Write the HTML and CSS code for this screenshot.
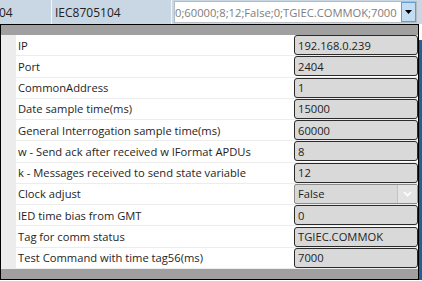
FILE: index.html
```html
<!DOCTYPE html>
<html lang="en">
<head>
    <meta charset="UTF-8">
    <title>Protocol Settings</title>
    <link rel="stylesheet" href="styles.css">
</head>
<body>
    <div class="grid-row">
        <div class="cell cell-id">04</div>
        <div class="cell cell-name">IEC8705104</div>
        <div class="cell cell-config">
            <div class="combo">
                <span class="combo-text">0;60000;8;12;False;0;TGIEC.COMMOK;7000</span>
                <span class="combo-button">
                    <svg width="7" height="4" viewBox="0 0 7 4"><path d="M0 0h7L3.5 4z" fill="#000"/></svg>
                </span>
            </div>
        </div>
    </div>

    <div class="lower">
        <div class="popup">
            <div class="popup-strip"></div>
            <div class="prop-list">
                <div class="prop-row"><div class="prop-name">IP</div><div class="prop-value">192.168.0.239</div></div>
                <div class="prop-row"><div class="prop-name">Port</div><div class="prop-value">2404</div></div>
                <div class="prop-row"><div class="prop-name">CommonAddress</div><div class="prop-value">1</div></div>
                <div class="prop-row"><div class="prop-name">Date sample time(ms)</div><div class="prop-value">15000</div></div>
                <div class="prop-row"><div class="prop-name">General Interrogation sample time(ms)</div><div class="prop-value">60000</div></div>
                <div class="prop-row"><div class="prop-name">w - Send ack after received w IFormat APDUs</div><div class="prop-value">8</div></div>
                <div class="prop-row"><div class="prop-name">k - Messages received to send state variable</div><div class="prop-value">12</div></div>
                <div class="prop-row">
                    <div class="prop-name">Clock adjust</div>
                    <div class="prop-value prop-select">
                        <span class="select-text">False</span>
                        <span class="select-button">
                            <svg width="9" height="6" viewBox="0 0 9 6"><path d="M1 1l3.5 3.5L8 1" fill="none" stroke="#fff" stroke-width="1.6"/></svg>
                        </span>
                    </div>
                </div>
                <div class="prop-row"><div class="prop-name">IED time bias from GMT</div><div class="prop-value">0</div></div>
                <div class="prop-row"><div class="prop-name">Tag for comm status</div><div class="prop-value">TGIEC.COMMOK</div></div>
                <div class="prop-row"><div class="prop-name">Test Command with time tag56(ms)</div><div class="prop-value">7000</div></div>
            </div>
            <div class="popup-strip popup-strip-bottom"></div>
        </div>
        <div class="edge"></div>
    </div>
</body>
</html>
```

FILE: styles.css
```css
body {
    margin: 0;
    width: 422px;
    height: 281px;
    overflow: hidden;
    background: #fff;
    font-family: "Open Sans", "Noto Sans", sans-serif;
    font-size: 11.2px;
    color: #1e1e1e;
}

/* grid row behind the dropdown */
.grid-row {
    display: flex;
    height: 24px;
    background: #c9d6e4;
}
.cell {
    flex-shrink: 0;
    display: flex;
    align-items: center;
    border-right: 1px solid #f4f7fa;
    font-size: 12px;
    color: #222;
}
.cell-id {
    width: 52px;
    margin-left: -1px;
}
.cell-name {
    width: 116px;
    padding-left: 3px;
}
.cell-config {
    flex: 1;
    min-width: 0;
    border-right: none;
    padding: 2px 5px 2px 2px;
}
.combo {
    flex: 1;
    min-width: 0;
    display: flex;
    align-items: center;
    height: 20px;
    background: #fff;
    border: 1px solid #b5bcc4;
}
.combo-text {
    flex: 1;
    min-width: 0;
    font-size: 11.2px;
    color: #7d7d7d;
    white-space: nowrap;
}
.combo-button {
    flex-shrink: 0;
    width: 13px;
    height: 18px;
    display: flex;
    align-items: center;
    justify-content: center;
    background: #c3def3;
    border: 1px solid #5f9fd3;
}

/* dropdown editor */
.lower {
    display: flex;
}
.popup {
    width: 417px;
    border: 1px solid #000;
    background: #fff;
}
.popup-strip {
    height: 10px;
    background: #a0a0a0;
}
.prop-list {
    padding-left: 15px;
    background: #ececec;
}
.prop-row {
    display: flex;
    align-items: center;
    height: 21.27px;
    background: #fff;
    border-bottom: 1px solid #ececec;
    box-sizing: border-box;
}
.prop-name {
    flex: 1;
    padding-left: 2px;
    white-space: nowrap;
    overflow: hidden;
}
.prop-value {
    width: 124px;
    height: 20px;
    box-sizing: border-box;
    padding-left: 3px;
    display: flex;
    align-items: center;
    background: #d9d9d9;
    border: 1px solid #2b2b2b;
    border-radius: 3px;
}
.prop-select {
    padding-left: 0;
    border-color: #8c8c8c;
    border-radius: 2px;
}
.select-text {
    flex: 1;
    padding-left: 3px;
}
.select-button {
    width: 19px;
    height: 18px;
    display: flex;
    align-items: center;
    justify-content: center;
    background: #e3e3e3;
    border-left: 1px solid #c4c4c4;
}
.edge {
    width: 3px;
    margin-top: 16px;
    background: #245f95;
}
```
